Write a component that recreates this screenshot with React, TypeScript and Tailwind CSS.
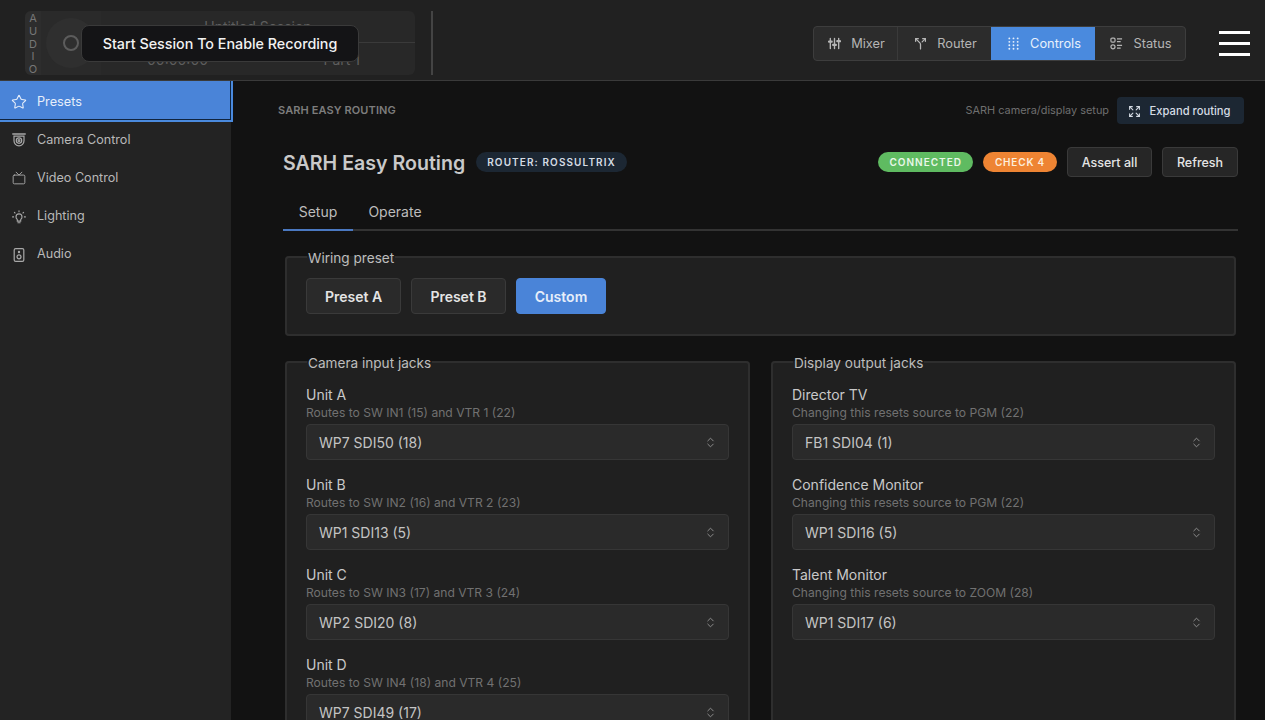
import { ChevronsUpDown, Expand, Split, Star, Tv } from "lucide-react";
import type { ComponentType } from "react";

type IconProps = { className?: string; strokeWidth?: number };
type IconType = ComponentType<IconProps>;

function MixerIcon({ className }: IconProps) {
  return (
    <svg viewBox="0 0 14 14" className={className} fill="none" stroke="currentColor" strokeWidth={1.5} strokeLinecap="round">
      <path d="M2.5 1.5v11M7 1.5v11M11.5 1.5v11" />
      <path d="M1 5h3M5.5 8.5h3M10 4.5h3" strokeWidth={2.4} />
    </svg>
  );
}

function GridDots({ className }: IconProps) {
  const cols = [2.5, 7, 11.5];
  const rows = [1.5, 5.2, 8.9, 12.6];
  return (
    <svg viewBox="0 0 14 14" className={className} fill="currentColor">
      {rows.map((y) => cols.map((x) => <circle key={`${x}-${y}`} cx={x} cy={y} r={1} />))}
    </svg>
  );
}

function StatusIcon({ className }: IconProps) {
  return (
    <svg viewBox="0 0 14 14" className={className} fill="none" stroke="currentColor" strokeWidth={1.3}>
      <rect x="1" y="1.2" width="4.4" height="4.4" rx="1.2" />
      <rect x="1" y="8.4" width="4.4" height="4.4" rx="2.2" />
      <path d="M7.5 2h5.5M7.5 5h4M7.5 9h5.5M7.5 12h4" />
    </svg>
  );
}

function DomeCamera({ className }: IconProps) {
  return (
    <svg viewBox="0 0 14 14" className={className} fill="none" stroke="currentColor" strokeWidth={1.2} strokeLinecap="round">
      <path d="M0.8 1h12.4" strokeWidth={1.5} />
      <path d="M2 3.2h10v4.6a5 5 0 0 1-10 0z" />
      <circle cx="7" cy="7.6" r="2.7" />
      <circle cx="7" cy="7.6" r="0.9" />
    </svg>
  );
}

function BulbIcon({ className }: IconProps) {
  return (
    <svg viewBox="0 0 14 14" className={className} fill="none" stroke="currentColor" strokeWidth={1.1} strokeLinecap="round">
      <path d="M5.3 9.6C4.6 8.8 4 8.2 4 6.9a3 3 0 0 1 6 0c0 1.3-.6 1.9-1.3 2.7v1.5H5.3z" />
      <path d="M5.9 12.8h2.2" />
      <path d="M7 .8v.9M2.4 2.4l.6.6M11.6 2.4l-.6.6M.6 6.9h1M12.4 6.9h1" />
    </svg>
  );
}

function SpeakerBox({ className }: IconProps) {
  return (
    <svg viewBox="0 0 14 14" className={className} fill="none" stroke="currentColor" strokeWidth={1.2}>
      <rect x="2.2" y="0.7" width="9.6" height="12.6" rx="1.4" />
      <circle cx="7" cy="8.8" r="2" />
      <circle cx="7" cy="4" r="0.6" fill="currentColor" />
    </svg>
  );
}

const navTabs: { label: string; icon: IconType; width: string; active?: boolean }[] = [
  { label: "Mixer", icon: MixerIcon, width: "w-[84px]" },
  { label: "Router", icon: Split, width: "w-[93px]" },
  { label: "Controls", icon: GridDots, width: "w-[104px]", active: true },
  { label: "Status", icon: StatusIcon, width: "w-[90px]" },
];

const sideItems: { label: string; icon: IconType; active?: boolean }[] = [
  { label: "Presets", icon: Star, active: true },
  { label: "Camera Control", icon: DomeCamera },
  { label: "Video Control", icon: Tv },
  { label: "Lighting", icon: BulbIcon },
  { label: "Audio", icon: SpeakerBox },
];

const cameras = [
  { name: "Unit A", hint: "Routes to SW IN1 (15) and VTR 1 (22)", value: "WP7 SDI50 (18)" },
  { name: "Unit B", hint: "Routes to SW IN2 (16) and VTR 2 (23)", value: "WP1 SDI13 (5)" },
  { name: "Unit C", hint: "Routes to SW IN3 (17) and VTR 3 (24)", value: "WP2 SDI20 (8)" },
  { name: "Unit D", hint: "Routes to SW IN4 (18) and VTR 4 (25)", value: "WP7 SDI49 (17)" },
];

const displays = [
  { name: "Director TV", hint: "Changing this resets source to PGM (22)", value: "FB1 SDI04 (1)" },
  { name: "Confidence Monitor", hint: "Changing this resets source to PGM (22)", value: "WP1 SDI16 (5)" },
  { name: "Talent Monitor", hint: "Changing this resets source to ZOOM (28)", value: "WP1 SDI17 (6)" },
];

function Recorder() {
  return (
    <div className="flex h-16 w-[390px] overflow-hidden rounded-md bg-[#282828]">
      <div className="flex w-[16px] flex-col items-center justify-between bg-[#2d2d2d] pt-[1px] text-[11px] leading-[12px] text-[#777]">
        {"AUDIO".split("").map((c, i) => (
          <span key={i}>{c}</span>
        ))}
      </div>
      <div className="flex w-[60px] items-center justify-center bg-[#2a2a2a]">
        <div className="flex h-[50px] w-[50px] items-center justify-center rounded-full bg-[#2f2f2f]">
          <div className="h-[16px] w-[16px] rounded-full border-2 border-[#5c5c5c]" />
        </div>
      </div>
      <div className="flex flex-1 flex-col text-[14px] text-[#5e5e5e]">
        <div className="flex h-[32px] items-center justify-center border-b border-[#3a3a3a]">Untitled Session</div>
        <div className="flex flex-1 items-center justify-between pr-[55px] pl-[46px]">
          <span>00:00:00</span>
          <span>Part 1</span>
        </div>
      </div>
    </div>
  );
}

function Header() {
  return (
    <header className="relative flex h-[81px] shrink-0 items-center border-b border-[#3a3a3a] bg-[#212121] pt-[6px] pr-[15px] pl-[25px]">
      <Recorder />
      <div className="absolute top-[25px] left-[81px] flex h-[37px] w-[278px] items-center justify-center rounded-lg border border-[#3a3a3a] bg-[#141416] text-[14.3px] font-medium text-[#f2f2f2]">
        Start Session To Enable Recording
      </div>
      <div className="ml-4 h-16 w-[2px] bg-[#444]" />
      <nav className="ml-auto flex h-[35px] overflow-hidden rounded border border-[#3d3d3d] bg-[#2c2c2c]">
        {navTabs.map((t, i) => {
          const Icon = t.icon;
          return (
            <div
              key={t.label}
              className={`flex items-center justify-center gap-[10px] pt-[1px] pl-[2px] text-[12.8px] ${t.width} ${
                t.active ? "bg-[#4a8ade] text-[#e8f1fc]" : "text-[#b5b5b5]"
              } ${i === 0 ? "border-r border-[#3a3a3a]" : ""}`}
            >
              <Icon className="h-[13px] w-[13px]" strokeWidth={2.4} />
              {t.label}
            </div>
          );
        })}
      </nav>
      <div className="ml-[33px] flex w-[31px] flex-col gap-[8px]">
        <div className="h-[3px] bg-white" />
        <div className="h-[3px] bg-white" />
        <div className="h-[3px] bg-white" />
      </div>
    </header>
  );
}

function Sidebar() {
  return (
    <aside className="relative z-10 w-[231px] shrink-0 bg-[#232323]">
      {sideItems.map((item) => {
        const Icon = item.icon;
        return (
          <div
            key={item.label}
            className={
              item.active
                ? "-mr-[2px] -mb-[2.2px] flex h-[41px] items-center gap-[10px] border-r-2 border-b-2 border-[#4a8ade] bg-[#4a84d8] pt-[2px] pl-[11px] text-[12.7px] text-[#e6eefa] shadow-[inset_-1px_-1px_0_#10243f]"
                : "flex h-[38.3px] items-center gap-[11px] pt-[2px] pl-[12px] text-[12.6px] text-[#b8b8b8]"
            }
          >
            <Icon className={item.active ? "h-4 w-4" : "h-[14px] w-[14px] text-[#a8a8a8]"} strokeWidth={1.6} />
            {item.label}
          </div>
        );
      })}
    </aside>
  );
}

function JackSelect({ name, hint, value }: { name: string; hint: string; value: string }) {
  return (
    <div>
      <div className="text-[14px] leading-[17px] text-[#c9c9c9]">{name}</div>
      <div className="mt-[2px] text-[12.1px] leading-[15px] text-[#717171]">{hint}</div>
      <div className="mt-[4px] flex h-[36px] items-center justify-between rounded border border-[#363636] bg-[#2a2a2a] pr-[11px] pl-[12px] text-[14px] text-[#c4c4c4]">
        {value}
        <ChevronsUpDown className="h-[13px] w-[13px] text-[#8f8f8f]" strokeWidth={1.8} />
      </div>
    </div>
  );
}

function JackGroup({ title, items }: { title: string; items: typeof cameras }) {
  return (
    <fieldset className="h-[420px] min-w-0 flex-1 rounded border-2 border-[#2e2e2e] bg-[#202020] px-[19px] pt-[16px]">
      <legend className="relative top-[2px] ml-[1px] px-[1px] text-[13.6px] leading-[17px] text-[#bdbdbd]">{title}</legend>
      <div className="flex flex-col gap-[16px]">
        {items.map((item) => (
          <JackSelect key={item.name} {...item} />
        ))}
      </div>
    </fieldset>
  );
}

function PresetButton({ label, active }: { label: string; active?: boolean }) {
  return (
    <div
      className={`flex h-[36px] items-center justify-center rounded border text-[14px] font-semibold ${
        active
          ? "w-[90px] border-[#4a84d8] bg-[#4a84d8] text-[#e6eefa]"
          : "w-[95px] border-[#3a3a3a] bg-[#2a2a2a] text-[#e4e4e4]"
      }`}
    >
      {label}
    </div>
  );
}

function Main() {
  return (
    <main className="min-w-0 flex-1 overflow-hidden bg-[#121212] pt-[16px] pr-[21px] pl-[47px]">
      <div className="flex h-[27px] items-center justify-between">
        <span className="text-[11px] font-semibold tracking-[0.1px] text-[#7d7d7d]">SARH EASY ROUTING</span>
        <div className="flex items-center gap-[8px]">
          <span className="text-[10.9px] text-[#6f6f6f]">SARH camera/display setup</span>
          <div className="flex h-[27px] w-[127px] items-center justify-center gap-[9px] rounded bg-[#1c2733] pt-[1px] pr-[3px] text-[11.2px] font-medium text-[#d5dce4]">
            <Expand className="h-[13px] w-[13px]" strokeWidth={2} />
            Expand routing
          </div>
        </div>
      </div>

      <div className="mt-[23px] mr-[6px] ml-[5px] flex h-[32px] items-center">
        <h1 className="pt-[2px] text-[19.6px] font-semibold text-[#c9c9c9]">SARH Easy Routing</h1>
        <span className="-mt-[2px] ml-[11px] flex h-[20px] items-center rounded-full bg-[#1c2733] px-[11px] text-[10px] font-semibold tracking-[1.1px] text-[#d5dce4]">
          ROUTER: ROSSULTRIX
        </span>
        <span className="-mt-[2px] ml-auto flex h-[20px] items-center rounded-full bg-[#5fbb61] px-[11px] text-[10px] font-semibold tracking-[1px] text-[#e9f7e9]">
          CONNECTED
        </span>
        <span className="-mt-[2px] ml-[10px] flex h-[20px] items-center rounded-full bg-[#ee8433] px-[12px] text-[10px] font-semibold tracking-[0.8px] text-[#fdeedd]">
          CHECK 4
        </span>
        <div className="-mt-[2px] ml-[10px] flex h-[30px] w-[85px] items-center justify-center rounded border border-[#3a3a3a] bg-[#262626] pt-[2px] text-[12.5px] font-medium text-[#e4e4e4]">
          Assert all
        </div>
        <div className="-mt-[2px] ml-[10px] flex h-[30px] w-[76px] items-center justify-center rounded border border-[#3a3a3a] bg-[#262626] pt-[2px] text-[12.5px] font-medium text-[#e4e4e4]">
          Refresh
        </div>
      </div>

      <div className="mt-[16px] mr-[6px] ml-[5px] flex h-[36px] border-b-2 border-[#333] pb-[2px] text-[14px] text-[#bdbdbd]">
        <div className="-mb-[4px] flex w-[70px] items-center justify-center border-b-2 border-[#4a78c0] pb-[2px]">Setup</div>
        <div className="flex w-[84px] items-center justify-center">Operate</div>
      </div>

      <fieldset className="mt-[17px] mr-[8px] ml-[7px] h-[88px] rounded border-2 border-[#2e2e2e] bg-[#202020] px-[19px] pt-[13px]">
        <legend className="relative top-[2px] ml-[1px] px-[1px] text-[13.6px] leading-[17px] text-[#bdbdbd]">Wiring preset</legend>
        <div className="flex gap-[10px]">
          <PresetButton label="Preset A" />
          <PresetButton label="Preset B" />
          <PresetButton label="Custom" active />
        </div>
      </fieldset>

      <div className="mt-[17px] mr-[8px] ml-[7px] flex gap-[21px]">
        <JackGroup title="Camera input jacks" items={cameras} />
        <JackGroup title="Display output jacks" items={displays} />
      </div>
    </main>
  );
}

export default function App() {
  return (
    <div className="flex h-screen flex-col overflow-hidden bg-[#121212] font-['Inter',sans-serif]">
      <Header />
      <div className="flex min-h-0 flex-1">
        <Sidebar />
        <Main />
      </div>
    </div>
  );
}
